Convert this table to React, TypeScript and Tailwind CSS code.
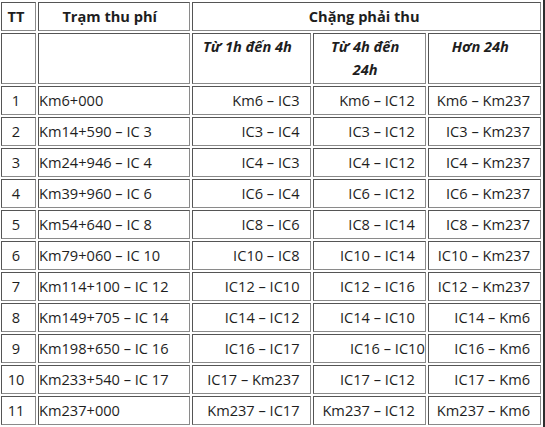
import React from "react";

const rows: [string, string, string, string, string][] = [
  ["1", "Km6+000", "Km6 – IC3", "Km6 – IC12", "Km6 – Km237"],
  ["2", "Km14+590 – IC 3", "IC3 – IC4", "IC3 – IC12", "IC3 – Km237"],
  ["3", "Km24+946 – IC 4", "IC4 – IC3", "IC4 – IC12", "IC4 – Km237"],
  ["4", "Km39+960 – IC 6", "IC6 – IC4", "IC6 – IC12", "IC6 – Km237"],
  ["5", "Km54+640 – IC 8", "IC8 – IC6", "IC8 – IC14", "IC8 – Km237"],
  ["6", "Km79+060 – IC 10", "IC10 – IC8", "IC10 – IC14", "IC10 – Km237"],
  ["7", "Km114+100 – IC 12", "IC12 – IC10", "IC12 – IC16", "IC12 – Km237"],
  ["8", "Km149+705 – IC 14", "IC14 – IC12", "IC14 – IC10", "IC14 – Km6"],
  ["9", "Km198+650 – IC 16", "IC16 – IC17", "IC16 – IC10", "IC16 – Km6"],
  ["10", "Km233+540 – IC 17", "IC17 – Km237", "IC17 – IC12", "IC17 – Km6"],
  ["11", "Km237+000", "Km237 – IC17", "Km237 – IC12", "Km237 – Km6"],
];

const cell =
  "border border-t-[#555] border-l-[#555] border-r-[#8a8a8a] border-b-[#8a8a8a] leading-[23px] whitespace-nowrap";

export default function App() {
  return (
    <div
      className="w-[545px] h-[427px] overflow-hidden bg-white text-[14.6px] text-[#1e1e1e]"
      style={{ fontFamily: '"Open Sans", "Noto Sans", sans-serif' }}
    >
      <table className="ml-[-1px] w-[546px] border-separate border-spacing-[2px] border-r-2 border-b-2 border-r-[#2e2e2e] border-b-[#2e2e2e]">
        <thead>
          <tr>
            <th className={`${cell} py-[2px] pl-0 pr-[5px] text-center font-bold`}>TT</th>
            <th className={`${cell} py-[2px] pl-0 pr-[9px] text-center font-bold`}>Trạm thu phí</th>
            <th colSpan={3} className={`${cell} py-[2px] pl-0 pr-[5px] text-center font-bold`}>
              Chặng phải thu
            </th>
          </tr>
          <tr>
            <th className={`${cell} w-[35px] pt-[1px] pb-[2px] align-top`}></th>
            <th className={`${cell} w-[152px] pt-[1px] pb-[2px] align-top`}></th>
            <th className={`${cell} w-[118px] pt-[1px] pb-[2px] pl-0 pr-[8px] align-top text-center font-bold italic`}>
              Từ 1h đến 4h
            </th>
            <th className={`${cell} w-[113px] pt-[1px] pb-[2px] pl-0 pr-[8px] align-top text-center font-bold italic`}>
              Từ 4h đến
              <br />
              24h
            </th>
            <th className={`${cell} w-[113px] pt-[1px] pb-[2px] pl-0 pr-[8px] align-top text-center font-bold italic`}>
              Hơn 24h
            </th>
          </tr>
        </thead>
        <tbody>
          {rows.map((r) => (
            <tr key={r[0]}>
              <td className={`${cell} py-[2px] pl-0 pr-[5px] text-center`}>{r[0]}</td>
              <td className={`${cell} py-[2px] pl-0 pr-0 text-left`}>{r[1]}</td>
              <td className={`${cell} py-[2px] pl-0 pr-[10px] text-right`}>{r[2]}</td>
              <td className={`${cell} py-[2px] pl-0 ${r[0] === "9" ? "pr-0" : "pr-[10px]"} text-right`}>{r[3]}</td>
              <td className={`${cell} py-[2px] pl-0 pr-[10px] text-right`}>{r[4]}</td>
            </tr>
          ))}
        </tbody>
      </table>
    </div>
  );
}
